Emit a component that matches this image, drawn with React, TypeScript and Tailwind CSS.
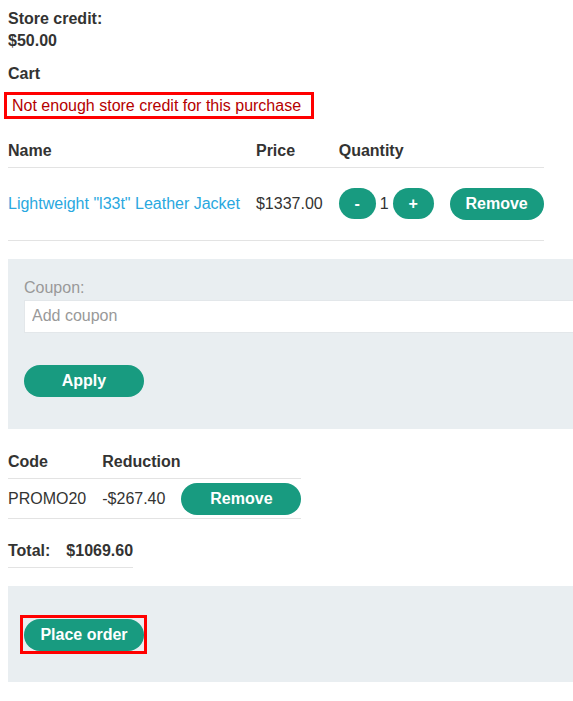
import React from "react";

const green = "bg-[#189b80]";

export default function App() {
  return (
    <div className="bg-white text-[#333332] text-[16px] leading-[22px] px-[8px] pt-[8px] pb-[19px]" style={{ fontFamily: '"Liberation Sans", Arial, sans-serif' }}>
      <div className="font-bold">
        <div>Store credit:</div>
        <div>$50.00</div>
      </div>
      <div className="font-bold mt-[11px]">Cart</div>
      <div className="mt-[7px] -ml-[4px] w-[310px] h-[27px] border-[3px] border-[#ff0000] pl-[5px] text-[#b50000] leading-[21px]">
        Not enough store credit for this purchase
      </div>
      <table className="mt-[16px] border-collapse">
        <thead>
          <tr className="border-b border-[#e3e3e3] h-[32px] text-left">
            <th className="pr-[16px] font-bold align-middle">Name</th>
            <th className="pr-[16px] font-bold align-middle">Price</th>
            <th className="font-bold align-middle" colSpan={2}>Quantity</th>
          </tr>
        </thead>
        <tbody>
          <tr className="border-b border-[#e3e3e3] h-[73px]">
            <td className="pr-[16px] text-[#29a8e0]">Lightweight "l33t" Leather Jacket</td>
            <td className="pr-[16px]">$1337.00</td>
            <td className="pr-[16px]">
              <div className="flex items-center">
                <button className={`${green} text-white font-bold rounded-full w-[37px] h-[31px]`}>-</button>
                <span className="mx-[4px]">1</span>
                <button className={`${green} text-white font-bold rounded-full w-[41px] h-[31px]`}>+</button>
              </div>
            </td>
            <td>
              <button className={`${green} text-white font-bold rounded-full w-[94px] h-[32px]`}>Remove</button>
            </td>
          </tr>
        </tbody>
      </table>
      <div className="mt-[18px] bg-[#e9eef1] w-[580px] h-[170px] px-[16px] pt-[18px]">
        <div className="text-[#999999]">Coupon:</div>
        <input
          className="mt-[1px] block w-[560px] h-[33px] bg-white border border-[#e3e7ea] px-[7px] text-[16px] placeholder:text-[#999999] outline-none"
          placeholder="Add coupon"
          style={{ fontFamily: '"Liberation Sans", Arial, sans-serif' }}
        />
        <button className={`${green} mt-[32px] text-white font-bold rounded-full w-[120px] h-[32px]`}>Apply</button>
      </div>
      <table className="mt-[18px] border-collapse">
        <thead>
          <tr className="border-b border-[#e3e3e3] h-[32px] text-left">
            <th className="pr-[16px] font-bold">Code</th>
            <th className="font-bold" colSpan={2}>Reduction</th>
          </tr>
        </thead>
        <tbody>
          <tr className="border-b border-[#e3e3e3] h-[40px]">
            <td className="pr-[16px]">PROMO20</td>
            <td className="pr-[16px]">-$267.40</td>
            <td>
              <button className={`${green} text-white font-bold rounded-full w-[120px] h-[32px] block`}>Remove</button>
            </td>
          </tr>
        </tbody>
      </table>
      <table className="mt-[21px] border-collapse">
        <tbody>
          <tr className="border-b border-[#e3e3e3] h-[27px] font-bold text-left align-top">
            <th className="pr-[16px]">Total:</th>
            <th>$1069.60</th>
          </tr>
        </tbody>
      </table>
      <div className="mt-[18px] bg-[#e9eef1] w-[580px] h-[96px] pl-[12px] pt-[29px]">
        <div className="inline-block border-[3px] border-[#ff0000] pl-[1px] pt-[1px]">
          <button className={`${green} block text-white font-bold rounded-full w-[120px] h-[32px]`}>Place order</button>
        </div>
      </div>
    </div>
  );
}
